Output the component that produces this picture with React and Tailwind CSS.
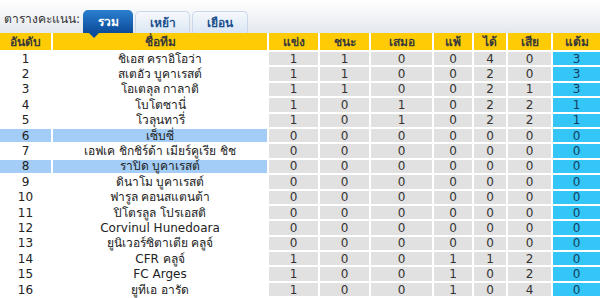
import React from 'react';

const rows = [
  [1, 'ชิเอส คราอิโอว่า', 1, 1, 0, 0, 4, 0, 3],
  [2, 'สเตอัว บูคาเรสต์', 1, 1, 0, 0, 2, 0, 3],
  [3, 'โอเตลุล กาลาติ', 1, 1, 0, 0, 2, 1, 3],
  [4, 'โบโตซานี่', 1, 0, 1, 0, 2, 2, 1],
  [5, 'โวลุนทารี่', 1, 0, 1, 0, 2, 2, 1],
  [6, 'เซ็บซี่', 0, 0, 0, 0, 0, 0, 0, true],
  [7, 'เอฟเค ชิกชิร์ด้า เมียร์คูเรีย ชิช', 0, 0, 0, 0, 0, 0, 0],
  [8, 'ราปิด บูคาเรสต์', 0, 0, 0, 0, 0, 0, 0, true],
  [9, 'ดินาโม บูคาเรสต์', 0, 0, 0, 0, 0, 0, 0],
  [10, 'ฟารูล คอนสแตนต้า', 0, 0, 0, 0, 0, 0, 0],
  [11, 'ปิโตรลูล โปรเอสติ', 0, 0, 0, 0, 0, 0, 0],
  [12, 'Corvinul Hunedoara', 0, 0, 0, 0, 0, 0, 0],
  [13, 'ยูนิเวอร์ซิตาเตีย คลูจ์', 0, 0, 0, 0, 0, 0, 0],
  [14, 'CFR คลูจ์', 1, 0, 0, 1, 1, 2, 0],
  [15, 'FC Arges', 1, 0, 0, 1, 0, 2, 0],
  [16, 'ยูทีเอ อารัด', 1, 0, 0, 1, 0, 4, 0],
];

const headers = ['อันดับ', 'ชื่อทีม', 'แข่ง', 'ชนะ', 'เสมอ', 'แพ้', 'ได้', 'เสีย', 'แต้ม'];

export default function App() {
  return (
    <div className="w-[600px] h-[298px] overflow-hidden bg-white text-[#222] font-['Tahoma','DejaVu_Sans',sans-serif] text-[12px]">
      <div className="h-[33px] flex items-end bg-gradient-to-b from-white to-[#e4e8ee]">
        <div className="pl-1 pb-[5px] pr-[3px] text-[#333] text-[12px]">ตารางคะแนน:</div>
        <div className="relative flex gap-[2px]">
          <div className="relative w-[50px] h-[23px] rounded-t-[5px] bg-gradient-to-b from-[#2b7fd0] to-[#0b4c9a] text-white font-bold flex items-center justify-center">
            รวม
            <span className="absolute left-[6px] -bottom-[5px] w-0 h-0 border-x-[5px] border-x-transparent border-t-[5px] border-t-[#0b4c9a]" />
          </div>
          <div className="w-[55px] h-[22px] mt-[1px] rounded-t-[5px] border border-b-0 border-[#c9d7e8] bg-gradient-to-b from-[#f6f9fd] to-[#dbe6f3] text-[#1b4f8e] font-bold flex items-center justify-center">
            เหย้า
          </div>
          <div className="w-[56px] h-[22px] mt-[1px] rounded-t-[5px] border border-b-0 border-[#c9d7e8] bg-gradient-to-b from-[#f6f9fd] to-[#dbe6f3] text-[#1b4f8e] font-bold flex items-center justify-center">
            เยือน
          </div>
        </div>
      </div>
      <div className="grid grid-cols-[51px_214px_49px_49px_61px_38px_32px_43px_47px] gap-x-[2px]">
        {headers.map((h) => (
          <div key={h} className="h-[17px] bg-[#fecb05] text-[#3a3a3a] font-bold flex items-center justify-center leading-none">
            {h}
          </div>
        ))}
      </div>
      <div className="mt-[2px] flex flex-col gap-y-[2px]">
        {rows.map((r) => {
          const hi = r[9];
          const side = hi ? 'bg-[#a3cdf6]' : 'bg-white';
          return (
            <div key={r[0]} className="grid grid-cols-[51px_214px_49px_49px_61px_38px_32px_43px_47px] gap-x-[2px] h-[13.4px] leading-none">
              <div className={`${side} flex items-center justify-center`}>{r[0]}</div>
              <div className={`${side} flex items-center justify-center`}>{r[1]}</div>
              {r.slice(2, 8).map((v, i) => (
                <div key={i} className="bg-[#e1e1e1] flex items-center justify-center text-[#333]">{v}</div>
              ))}
              <div className="bg-[#33c6f7] flex items-center justify-center text-[#163c5c]">{r[8]}</div>
            </div>
          );
        })}
      </div>
    </div>
  );
}
